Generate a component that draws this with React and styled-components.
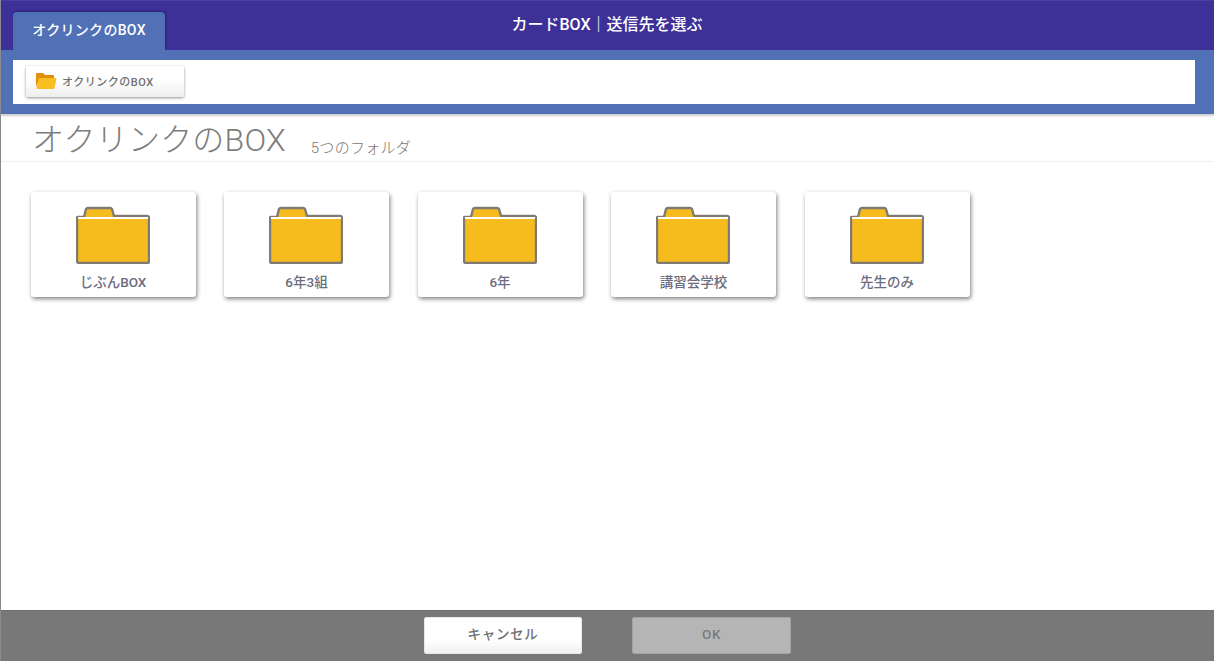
import React from 'react'
import styled, { createGlobalStyle } from 'styled-components'

const folders = ['じぶんBOX', '6年3組', '6年', '講習会学校', '先生のみ']

const GlobalStyle = createGlobalStyle`
  html, body {
    margin: 0;
    padding: 0;
    background: #fff;
  }
  body {
    font-family: Roboto, "Noto Sans CJK JP", sans-serif;
  }
`

const Page = styled.div`
  width: 1214px;
  height: 661px;
  display: flex;
  flex-direction: column;
  overflow: hidden;
  border-left: 1px solid #8a8a92;
  box-sizing: border-box;
  background: #fff;
`
const Header = styled.div`
  height: 50px;
  flex-shrink: 0;
  background: #3d3198;
  border-top: 1px solid #4a3fa0;
  box-sizing: border-box;
  display: grid;
  grid-template-columns: 1fr auto 1fr;
  padding-left: 12px;
`
const Tab = styled.div`
  justify-self: start;
  align-self: end;
  width: 152px;
  height: 38px;
  background: #5170b6;
  border-radius: 4px 4px 0 0;
  box-shadow: 1px -1px 2px rgba(20, 16, 70, 0.45);
  color: #fff;
  font-size: 14px;
  font-weight: 500;
  letter-spacing: 0.3px;
  line-height: 36px;
  text-align: center;
`
const Title = styled.div`
  color: #fff;
  font-size: 16px;
  font-weight: 500;
  line-height: 47px;
  margin-right: 13px;
`
const PathBar = styled.div`
  height: 64px;
  flex-shrink: 0;
  background: #5170b6;
  box-sizing: border-box;
  padding: 10px 19px 10px 12px;
  box-shadow: 0 2px 2px rgba(0, 0, 0, 0.2);
  position: relative;
`
const PathInner = styled.div`
  height: 44px;
  background: #fff;
  box-sizing: border-box;
  padding: 6px 13px;
`
const Crumb = styled.div`
  width: 158px;
  height: 31px;
  box-sizing: border-box;
  border-radius: 2px;
  background: linear-gradient(#fff 40%, #eeeeee);
  box-shadow: 0 1px 3px rgba(0, 0, 0, 0.45);
  display: flex;
  align-items: center;
  gap: 5px;
  padding: 0 0 2px 9px;
  color: #6f6f6f;
  font-size: 11px;
  font-weight: 500;
  letter-spacing: 0.5px;
`
const Heading = styled.div`
  height: 48px;
  flex-shrink: 0;
  box-sizing: border-box;
  border-bottom: 1px solid #f0f0f0;
  display: flex;
  align-items: flex-start;
  padding-left: 31px;
  gap: 25px;
`
const HeadingText = styled.div`
  color: #7d7d7d;
  font-size: 32px;
  font-weight: 300;
  line-height: 53px;
  letter-spacing: 0.2px;
`
const HeadingCount = styled.div`
  margin-top: 23px;
  color: #7d7570;
  font-size: 15px;
  font-weight: 300;
  line-height: 22px;
  letter-spacing: 0.3px;
`
const Main = styled.div`
  flex: 1;
  display: flex;
  align-items: flex-start;
  gap: 28.5px;
  padding: 30px 0 0 29.5px;
`
const Card = styled.div`
  width: 165px;
  height: 105px;
  flex-shrink: 0;
  background: #fff;
  border-radius: 3px;
  box-shadow: 1px 2px 4px rgba(0, 0, 0, 0.5);
  display: flex;
  flex-direction: column;
  align-items: center;
  padding-top: 15px;
  box-sizing: border-box;
`
const CardLabel = styled.div`
  margin-top: 8px;
  color: #6c6c80;
  font-size: 13.5px;
  font-weight: 500;
  line-height: 20px;
`
const Footer = styled.div`
  height: 51px;
  flex-shrink: 0;
  background: #787878;
  border-top: 1px solid #6f6f6f;
  box-sizing: border-box;
  display: flex;
  justify-content: center;
  align-items: center;
  gap: 50px;
  padding-bottom: 1px;
`
const Button = styled.div`
  width: ${p => (p.$disabled ? '159px' : '158px')};
  height: 37px;
  box-sizing: border-box;
  border-radius: 2px;
  border: 1px solid ${p => (p.$disabled ? '#a3a3a3' : '#e8e8e8')};
  background: ${p => (p.$disabled ? '#b5b5b5' : 'linear-gradient(#fff 60%, #f1f1f1)')};
  color: ${p => (p.$disabled ? '#7a7a7a' : '#6f6f6f')};
  font-size: 13.5px;
  font-weight: 500;
  letter-spacing: 0.7px;
  line-height: 33px;
  text-align: center;
`
const FolderSvg = styled.svg`
  flex-shrink: 0;
  margin: -1px 0 0 -1px;
`

const FolderIcon = () => (
  <FolderSvg width="74" height="58" viewBox="0 0 74 58">
    <path d="M2 11 H8 L10 3 Q10.500 2 12 2 H34 Q35.500 2 36 3 L38 10 H71 Q73 10 73 12 V55 Q73 57 71 57 H3 Q1 57 1 55 V12 Q1 11 2 11 Z" fill="#f6bc1d" stroke="#7f7b73" strokeWidth="2.400" strokeLinejoin="round" />
    <rect x="2" y="11" width="70" height="2" fill="#fff" />
  </FolderSvg>
)

const OpenFolderIcon = () => (
  <svg width="22" height="18" viewBox="0 0 22 18">
    <path d="M1 15 V2 Q1 1 2 1 H8 L10 3 H18 Q19 3 19 4 V6 H5 Z" fill="#e38d0c" />
    <path d="M4.500 6 H20.500 Q21.500 6 21.300 7 L19.500 16 Q19.300 17 18.300 17 H2.500 Q1.500 17 1.700 16 L3.500 7 Q3.700 6 4.500 6 Z" fill="#f8bd1e" />
  </svg>
)

const App = () => (
  <Page>
    <GlobalStyle />
    <Header>
      <Tab>オクリンクのBOX</Tab>
      <Title>カードBOX｜送信先を選ぶ</Title>
    </Header>
    <PathBar>
      <PathInner>
        <Crumb>
          <OpenFolderIcon />
          オクリンクのBOX
        </Crumb>
      </PathInner>
    </PathBar>
    <Heading>
      <HeadingText>オクリンクのBOX</HeadingText>
      <HeadingCount>5つのフォルダ</HeadingCount>
    </Heading>
    <Main>
      {folders.map(name => (
        <Card key={name}>
          <FolderIcon />
          <CardLabel>{name}</CardLabel>
        </Card>
      ))}
    </Main>
    <Footer>
      <Button>キャンセル</Button>
      <Button $disabled>OK</Button>
    </Footer>
  </Page>
)

export default App
